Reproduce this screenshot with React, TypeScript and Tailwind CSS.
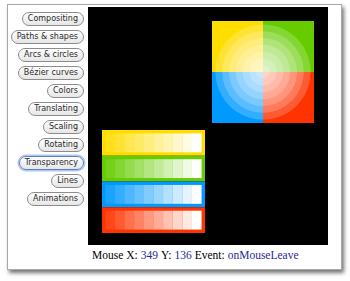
import React from 'react';

const buttons = [
  'Compositing',
  'Paths & shapes',
  'Arcs & circles',
  'Bézier curves',
  'Colors',
  'Translating',
  'Scaling',
  'Rotating',
  'Transparency',
  'Lines',
  'Animations',
];

const bandColors = ['rgb(255,221,0)', 'rgb(102,204,0)', 'rgb(0,153,255)', 'rgb(255,51,0)'];

function Canvas() {
  return (
    <svg width="240" height="238" viewBox="0 0 240 238" className="block">
      <rect width="240" height="238" fill="#000" />
      {/* global alpha quadrants */}
      <g transform="translate(124,14) scale(0.68)">
        <rect x="0" y="0" width="75" height="75" fill="#FD0" />
        <rect x="75" y="0" width="75" height="75" fill="#6C0" />
        <rect x="0" y="75" width="75" height="75" fill="#09F" />
        <rect x="75" y="75" width="75" height="75" fill="#F30" />
        {[0, 1, 2, 3, 4, 5, 6].map((i) => (
          <circle key={i} cx="75" cy="75" r={10 + 10 * i} fill="#fff" fillOpacity="0.2" />
        ))}
      </g>
      {/* rgba bands */}
      <g transform="translate(14,123) scale(0.6867)">
        {bandColors.map((c, j) => (
          <rect key={c} x="0" y={j * 37.5} width="150" height="37.5" fill={c} />
        ))}
        {Array.from({ length: 10 }).map((_, i) =>
          [0, 1, 2, 3].map((j) => (
            <rect
              key={`${i}-${j}`}
              x={5 + i * 14}
              y={5 + j * 37.5}
              width="14"
              height="27.5"
              fill="#fff"
              fillOpacity={(i + 1) / 10}
            />
          ))
        )}
      </g>
    </svg>
  );
}

export default function App() {
  return (
    <div className="w-[350px] h-[281px] bg-white overflow-hidden">
      <div className="ml-[7px] mt-[4px] w-[335px] h-[266px] bg-white border border-[#a8a8a8] shadow-[2px_3px_4px_rgba(0,0,0,0.55)] flex pt-[2px]">
        <div className="w-[80px] flex flex-col items-end gap-[4px] pt-[5px] pr-[4px]">
          {buttons.map((b) => (
            <div
              key={b}
              className={
                b === 'Transparency'
                  ? 'h-[14px] px-[5px] rounded-full border border-[#5a7fc4] shadow-[0_0_0_1.5px_rgba(120,160,230,0.6)] bg-gradient-to-b from-white to-[#e6e6e6] flex items-center text-[8px] text-[#2a2a2a] leading-none'
                  : 'h-[14px] px-[5px] rounded-full border border-[#8c8c8c] bg-gradient-to-b from-white to-[#e6e6e6] flex items-center text-[8px] text-[#2a2a2a] leading-none'
              }
              style={{ fontFamily: '"DejaVu Sans", sans-serif' }}
            >
              {b}
            </div>
          ))}
        </div>
        <div className="flex flex-col">
          <Canvas />
          <div
            className="mt-[5px] pl-[4px] text-[11.5px] text-black leading-none flex gap-[3px]"
            style={{ fontFamily: '"Liberation Serif", serif' }}
          >
            <span>Mouse X:</span>
            <span className="text-[#2a2a8c]">349</span>
            <span>Y:</span>
            <span className="text-[#2a2a8c]">136</span>
            <span>Event:</span>
            <span className="text-[#2a2a8c]">onMouseLeave</span>
          </div>
        </div>
      </div>
    </div>
  );
}
